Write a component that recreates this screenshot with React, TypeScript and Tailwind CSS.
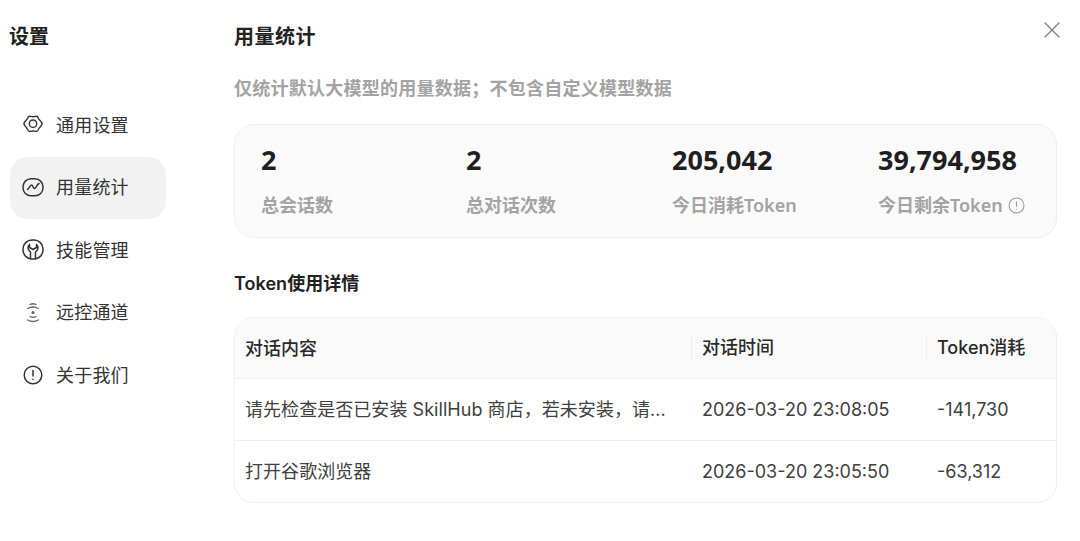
import { X } from "lucide-react";

const GearIcon = () => (
  <svg width="22" height="22" viewBox="0 0 22 22" fill="none" stroke="#333" strokeWidth="1.400" strokeLinejoin="round">
    <path d="M6.200 3.200c.5-.9 1.200-1 2-.9 2 .6 3.600.6 5.600 0 .8-.1 1.500 0 2 .9.900 1.900 1.900 3.300 3.400 4.600.7.700 1.100 2.400 0 3.900-1.400 1.200-2.500 2.800-3.400 4.800-.5.900-1.200 1-2 .9-2-.6-3.600-.6-5.600 0-.8.100-1.500 0-2-.9-.9-2-2-3.600-3.400-4.800-1.100-1.500-.7-3.200 0-3.900 1.500-1.300 2.500-2.700 3.400-4.600z" />
    <circle cx="11" cy="9.700" r="3.700" />
  </svg>
);

const ChartIcon = () => (
  <svg width="22" height="22" viewBox="0 0 22 22" fill="none" stroke="#333" strokeWidth="1.500" strokeLinecap="round" strokeLinejoin="round">
    <rect x="1" y="1.800" width="20" height="17" rx="8" />
    <path d="M5.500 12.500c1.500-1 2.500-4.500 4-4.500s1.500 3.500 3 3.500 2-3.500 4.500-5" />
  </svg>
);

const SkillIcon = () => (
  <svg width="22" height="22" viewBox="0 0 22 22" fill="none" stroke="#333" strokeWidth="1.500" strokeLinecap="round" strokeLinejoin="round">
    <rect x="1" y="1" width="20" height="19" rx="9" />
    <path d="M7.500 5.500c-2 1.500-2 5 0 6.500l1 1v7M14.500 5.500c2 1.500 2 5 0 6.500l-1 1v7M7.500 5.500v3l3.500 2 3.500-2v-3" />
  </svg>
);

const RemoteIcon = () => (
  <svg width="20" height="20" viewBox="0 0 20 20" fill="none" stroke="#666" strokeWidth="1.300" strokeLinecap="round">
    <path d="M7 1.500q3-1.500 6 0M4.500 5.500q5.500-3 11 0" />
    <circle cx="10" cy="9.500" r="1.600" fill="#666" stroke="none" />
    <path d="M7 13.500q3 1.800 6 0M4.500 17q5.500 3 11 0" />
  </svg>
);

const InfoIcon = ({ size, color, width }: { size: number; color: string; width: number }) => (
  <svg width={size} height={size} viewBox="0 0 20 20" fill="none" stroke={color} strokeWidth={width} strokeLinecap="round">
    <circle cx="10" cy="10" r="8.800" />
    <path d="M10 5.500v5.500M10 14.300v.2" />
  </svg>
);

const navItems = [
  { label: "通用设置", icon: <GearIcon /> },
  { label: "用量统计", icon: <ChartIcon />, active: true },
  { label: "技能管理", icon: <SkillIcon /> },
  { label: "远控通道", icon: <RemoteIcon /> },
  { label: "关于我们", icon: <InfoIcon size={20} color="#333" width={1.500} /> },
];

const stats = [
  { value: "2", label: "总会话数" },
  { value: "2", label: "总对话次数" },
  { value: "205,042", label: "今日消耗Token" },
  { value: "39,794,958", label: "今日剩余Token", info: true },
];

const rows = [
  { text: "请先检查是否已安装 SkillHub 商店，若未安装，请...", time: "2026-03-20 23:08:05", used: "-141,730" },
  { text: "打开谷歌浏览器", time: "2026-03-20 23:05:50", used: "-63,312" },
];

export default function App() {
  return (
    <div className="relative flex h-[541px] w-[1080px] overflow-hidden bg-white font-['Inter','Noto_Sans_CJK_SC',sans-serif] text-[#333]">
      <aside className="w-[234px] shrink-0 pl-[10px]">
        <h1 className="mt-[23px] -ml-[1px] text-[20px] leading-[28px] font-semibold text-[#222]">设置</h1>
        <nav className="mt-[43px] flex w-[156px] flex-col">
          {navItems.map((item) => (
            <div
              key={item.label}
              className={`flex h-[62.5px] items-center gap-[12px] rounded-[18px] pl-[12px] text-[18px] ${item.active ? "bg-[#f2f2f2]" : ""}`}
            >
              <span className="flex w-[22px] justify-center">{item.icon}</span>
              <span className="tracking-[0.2px]">{item.label}</span>
            </div>
          ))}
        </nav>
      </aside>

      <main className="w-[823px] shrink-0">
        <h2 className="mt-[22px] text-[20px] leading-[30px] font-semibold tracking-[0.5px] text-[#222]">用量统计</h2>
        <p className="mt-[24px] text-[18px] leading-[26px] font-semibold tracking-[0.25px] text-[#a3a3a3]">
          仅统计默认大模型的用量数据；不包含自定义模型数据
        </p>

        <section className="mt-[22px] grid h-[114px] grid-cols-[205px_206px_206px_1fr] items-center rounded-[20px] border border-[#efefef] bg-[#fafafa] pb-[2px] pl-[26px]">
          {stats.map((s) => (
            <div key={s.label} className="flex flex-col">
              <span className="font-['Noto_Sans','Noto_Sans_CJK_SC',sans-serif] text-[27px] leading-[36px] font-bold text-[#1f1f1f]">{s.value}</span>
              <span className="mt-[14px] flex items-center gap-[5px] font-['Noto_Sans','Noto_Sans_CJK_SC',sans-serif] text-[18px] leading-[26px] font-semibold whitespace-nowrap text-[#a3a3a3]">
                {s.label}
                {s.info && <InfoIcon size={17} color="#999" width={1.200} />}
              </span>
            </div>
          ))}
        </section>

        <h3 className="mt-[33px] text-[18px] leading-[26px] font-semibold tracking-[0.05px] text-[#222]">Token使用详情</h3>

        <section className="mt-[20px] overflow-hidden rounded-[20px] border border-[#efefef]">
          <div className="grid h-[61px] grid-cols-[456px_235px_1fr] items-center border-b border-[#efefef] bg-[#fafafa] text-[18px] font-medium text-[#2a2a2a]">
            <div className="pl-[10px]">对话内容</div>
            <div className="border-l border-[#eeeeee] pl-[10px] leading-[28px]">对话时间</div>
            <div className="border-l border-[#eeeeee] pl-[10px] leading-[28px]">Token消耗</div>
          </div>
          {rows.map((r, i) => (
            <div
              key={r.time}
              className={`grid h-[61.5px] grid-cols-[456px_235px_1fr] items-center text-[18px] text-[#404040] ${i === 0 ? "border-b border-[#efefef]" : ""}`}
            >
              <div className="pl-[10px] tracking-[0.05px] whitespace-nowrap">{r.text}</div>
              <div className="pl-[11px]">{r.time}</div>
              <div className="pl-[11px]">{r.used}</div>
            </div>
          ))}
        </section>
      </main>

      <X className="absolute top-[16px] right-[14px] text-[#808080]" size={28} strokeWidth={1.200} />
    </div>
  );
}
